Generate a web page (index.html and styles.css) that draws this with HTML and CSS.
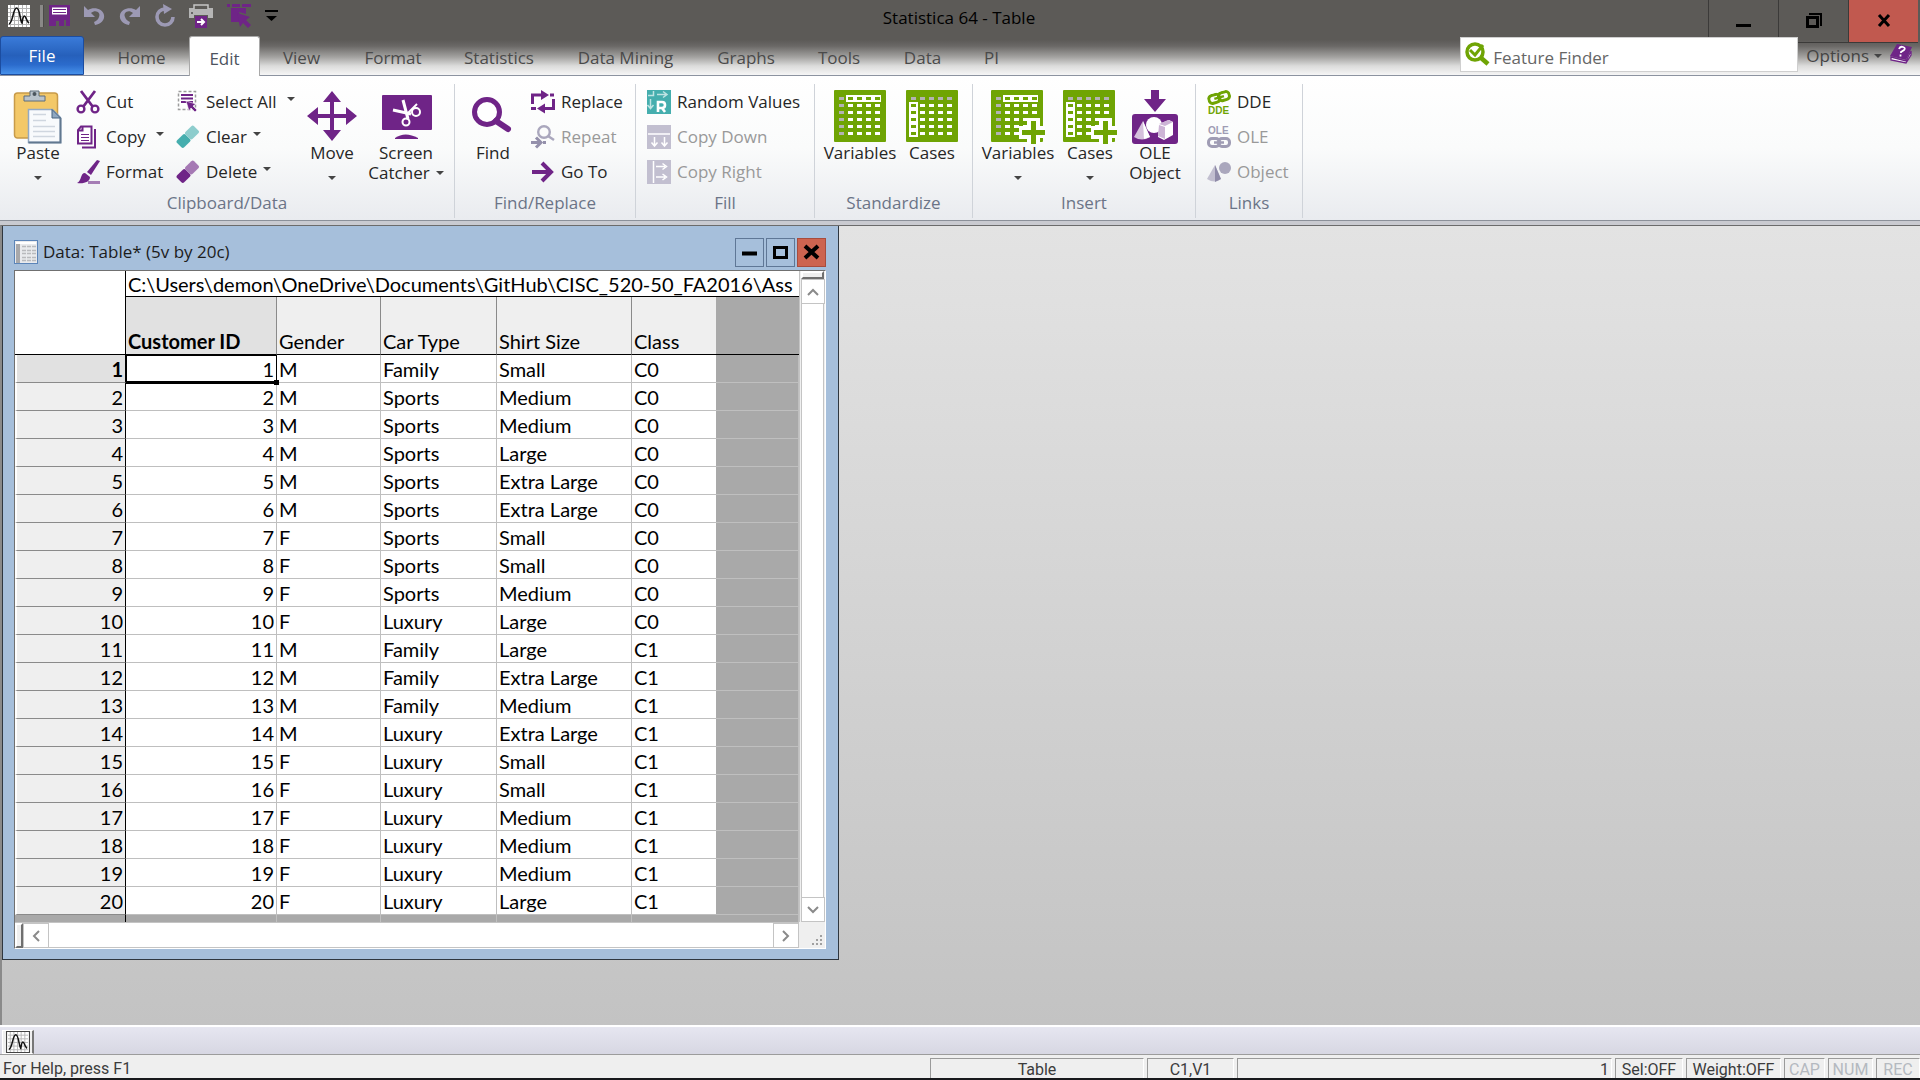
FILE: index.html
```html
<!DOCTYPE html>
<html lang="en">
<head>
<meta charset="utf-8">
<title>Statistica 64 - Table</title>
<link rel="stylesheet" href="styles.css">
</head>
<body>
<svg class="defs" aria-hidden="true">
  <symbol id="i-chart" viewBox="0 0 22 22">
    <rect width="22" height="22" fill="#fff"/>
    <path d="M2.500 0v22M6.500 0v22M10.500 0v22M14.500 0v22M18.500 0v22M0 3.500h22M0 7.500h22M0 11.500h22M0 15.500h22M0 19.500h22" stroke="#b4b4b4"/>
    <path d="M1 19C5 18 5 3 8.500 3S12 16 14 18C15 13 15 11 16.500 11S18 16 21 18" fill="none" stroke="#111" stroke-width="1.600"/>
  </symbol>
  <symbol id="i-grid" viewBox="0 0 54 54">
    <rect width="52" height="52" rx="1" fill="#6fa404"/>
    <path d="M14 15.500h33M14 22.500h33M14 29.500h33M14 36.500h33M14 43.500h33" stroke="#fff" stroke-width="3" stroke-dasharray="5 4"/>
  </symbol>
  <symbol id="i-vars" viewBox="0 0 54 54">
    <use href="#i-grid" width="54" height="54"/>
    <path d="M5 8.500h5M5 15.500h5M5 22.500h5M5 29.500h5M5 36.500h5M5 43.500h5" stroke="#b3b3b3" stroke-width="3"/>
    <rect x="12" y="5" width="35" height="7" fill="#fff"/>
    <path d="M14 8.500h32" stroke="#6fa404" stroke-width="3" stroke-dasharray="5 4"/>
  </symbol>
  <symbol id="i-cases" viewBox="0 0 54 54">
    <use href="#i-grid" width="54" height="54"/>
    <path d="M5 8.500h42" stroke="#b3b3b3" stroke-width="3" stroke-dasharray="5 4"/>
    <rect x="3" y="12" width="9" height="35" fill="#fff"/>
    <path d="M5 15.500h5M5 22.500h5M5 29.500h5M5 36.500h5M5 43.500h5" stroke="#6fa404" stroke-width="3"/>
  </symbol>
  <symbol id="i-plus" viewBox="0 0 54 54">
    <path d="M36 28h13v8h5v12h-5v6h-13v-5h-8v-13h8z" fill="#fff"/>
    <path d="M42.500 31v23M31 42.500h23" stroke="#6fa404" stroke-width="5"/>
  </symbol>
  <symbol id="i-shears" viewBox="0 0 24 24">
    <path d="M5 1L17 17M19 1L7 17" stroke="currentColor" stroke-width="2.800" fill="none"/>
    <circle cx="5" cy="19" r="3.400" fill="none" stroke="currentColor" stroke-width="2.400"/>
    <circle cx="19" cy="19" r="3.400" fill="none" stroke="currentColor" stroke-width="2.400"/>
  </symbol>
  <symbol id="i-eraser" viewBox="0 0 24 24">
    <rect x="-6" y="-5" width="12" height="10" rx="2" transform="translate(16 7.500) rotate(-45)" fill="currentColor" opacity=".6"/>
    <rect x="-6" y="-5" width="12" height="10" rx="2" transform="translate(7.500 16) rotate(-45)" fill="currentColor"/>
  </symbol>
  <symbol id="i-links" viewBox="0 0 24 12">
    <rect x="1.500" y="1.500" width="11" height="8" rx="3.500" fill="none" stroke="currentColor" stroke-width="3"/>
    <rect x="11.500" y="1.500" width="11" height="8" rx="3.500" fill="none" stroke="currentColor" stroke-width="3"/>
    <path d="M7 5.500h10" stroke="currentColor" stroke-width="2.500"/>
  </symbol>
</svg>

<header class="header">
  <div class="titlebar">
    <div class="quick">
      <svg class="app" width="22" height="22"><use href="#i-chart"/></svg>
      <i class="grip"></i>
      <button aria-label="Save"><svg width="21" height="21" viewBox="0 0 21 21"><path d="M0 0h21v21h-4v-6h-2v6h-5v-5H7v5H0z" fill="#6f2487"/><path d="M3 2.500h15v7H3z" fill="#fff"/><path d="M4 4.500h13M4 7.500h13" stroke="#6f2487"/></svg></button>
      <button aria-label="Undo"><svg width="21" height="21" viewBox="0 0 21 21"><path d="M0 1v11h11L7 8c5-4 10 0 8 4-1 3-3 4-5 5l1 3c6-1 10-5 9-10C19 4 10 1 4 5z" fill="#9c99b4"/></svg></button>
      <button aria-label="Redo"><svg width="21" height="21" viewBox="0 0 21 21"><path d="M21 1v11H10l4-4C9 4 4 8 6 12c1 3 3 4 5 5l-1 3C4 19 0 15 1 10 2 4 11 1 17 5z" fill="#9c99b4"/></svg></button>
      <button aria-label="Repeat"><svg width="21" height="23" viewBox="0 0 21 23"><path d="M11 5a8 8 0 1 0 8 8" fill="none" stroke="#9c99b4" stroke-width="3.600"/><path d="M9 0l9 5-8 5z" fill="#9c99b4"/></svg></button>
      <button aria-label="Print"><svg width="24" height="24" viewBox="0 0 24 24"><path d="M0 4h24v10h-5v-3H5v3H0z" fill="#b5b5b5"/><path d="M5 5V1h14v4" fill="#5c5a57" stroke="#c5c5c5" stroke-width="1.500"/><rect x="2" y="8" width="2" height="2" fill="#666"/><rect x="6" y="12" width="12" height="12" fill="#6f2487"/><path d="M8 18h7M12 15l3 3-3 3" fill="none" stroke="#fff" stroke-width="2"/></svg></button>
      <button aria-label="Select"><svg width="24" height="24" viewBox="0 0 24 24"><path d="M0 1.500h3M5 1.500h8M15 1.500h9" stroke="#6f2487" stroke-width="3"/><path d="M4 4h15v6l-7-2 3 10H4z" fill="#6f2487"/><path d="M10 9l13 4-4 3 5 5-3 3-5-5-3 4z" fill="#6f2487"/></svg></button>
      <button aria-label="Customize"><svg width="13" height="12" viewBox="0 0 13 12"><path d="M0 1h13" stroke="#000" stroke-width="2"/><path d="M1 6h11L6.500 11z"/></svg></button>
    </div>
    <h1 class="caption">Statistica 64 - Table</h1>
    <div class="controls">
      <button aria-label="Minimize"><svg width="16" height="16"><path d="M0 12.500h15" stroke="#000" stroke-width="3"/></svg></button>
      <button aria-label="Restore"><svg width="16" height="16"><path d="M3 1h12v12" fill="none" stroke="#000" stroke-width="2"/><rect x="1.500" y="4.500" width="10" height="9" fill="none" stroke="#000" stroke-width="3"/></svg></button>
      <button class="close" aria-label="Close"><svg width="16" height="16"><path d="M3 2l10 11M13 2L3 13" stroke="#000" stroke-width="3"/></svg></button>
    </div>
  </div>
  <div class="tabrow">
    <nav class="tabs">
      <button class="file">File</button>
      <button class="home">Home</button><button class="on">Edit</button><button>View</button><button>Format</button><button>Statistics</button><button>Data Mining</button><button>Graphs</button><button>Tools</button><button>Data</button><button>PI</button>
    </nav>
    <label class="finder">
      <svg width="24" height="24" viewBox="0 0 24 24"><path d="M15 15l8 7" stroke="#6fa404" stroke-width="4.500"/><circle cx="10" cy="10" r="8" fill="#fff" stroke="#6fa404" stroke-width="3.500"/><path d="M5 8l5 5 8-10" fill="none" stroke="#6fa404" stroke-width="3"/></svg>
      <input type="text" placeholder="Feature Finder" aria-label="Feature Finder">
    </label>
    <button class="options">Options <i class="arrow"></i></button>
    <button class="help" aria-label="Help"><svg width="22" height="20" viewBox="0 0 22 20"><path d="M7 0l15 3-6 13L0 12z" fill="#6f2487"/><path d="M1 13l15 4 5-10v4l-5 8L1 16z" fill="#fff" stroke="#6f2487" stroke-width="1.300"/><path d="M9 5q1-3 4-2t1 3l-3 2v1M10.500 10.500v2" fill="none" stroke="#fff" stroke-width="1.800"/></svg></button>
  </div>
</header>

<section class="ribbon">
  <div class="group tight">
    <div class="tools">
      <button class="big"><svg width="54" height="54" viewBox="0 0 54 54"><rect x="3.500" y="3" width="43" height="45" rx="3" fill="#f3c868" stroke="#c89b4a" stroke-width="1.500"/><path d="M13 11V6h6V1h9v5h6v5z" fill="#b9c3cc" stroke="#5d6c7b"/><circle cx="23.500" cy="4" r="2" fill="#4b555e"/><path d="M17.500 19.500h24l8 8v25h-32z" fill="#f8fafc" stroke="#93a9c2" stroke-width="1.500"/><path d="M41 19.500v8.500h8.500z" fill="#8fa7c0" stroke="#47637f"/><path d="M49.500 28v24.500h-32" fill="none" stroke="#61788f" stroke-width="2"/><path d="M22 24.500h13M22 30.500h13M22 36.500h22M22 41.500h22M22 46.500h22" stroke="#cfd6df" stroke-width="1.500"/></svg><span>Paste</span><i class="arrow"></i></button>
      <div class="stack s1">
        <button><svg class="violet" width="24" height="24"><use href="#i-shears"/></svg>Cut</button>
        <button class="split"><svg width="24" height="24" viewBox="0 0 24 24"><path d="M5 1.500h10.500v17H2V5z" fill="#fff" stroke="#6f2487" stroke-width="2"/><path d="M2 5.500h4.500V1" fill="none" stroke="#6f2487" stroke-width="2"/><path d="M5 9.500h8M5 12.500h8M5 15.500h8" stroke="#6f2487"/><path d="M19 4v18.500H6" fill="none" stroke="#6f2487" stroke-width="2"/></svg>Copy<i class="arrow"></i></button>
        <button><svg width="24" height="24" viewBox="0 0 24 24"><path d="M21 0l3 1-9 14-4-3z" fill="#6f2487"/><path d="M9 13l5 4c0 5-6 7-13 6 5-2 3-10 8-10z" fill="#6f2487"/><path d="M12 22.500h12" stroke="#a57db5" stroke-width="3"/></svg>Format</button>
      </div>
      <div class="stack s2">
        <button class="split"><svg width="24" height="24" viewBox="0 0 24 24"><path d="M2.500 1.500h17v18h-17z" fill="none" stroke="#9c9c9c" stroke-width="1.500" stroke-dasharray="3 2"/><path d="M5 5h12M5 8.500h12M5 12h12" stroke="#6f2487" stroke-width="2.200"/><path d="M10 11l10 3-3 2 4 4-2 2-4-4-2 3z" fill="#6f2487" stroke="#fff" stroke-width=".6"/></svg>Select All<i class="arrow"></i></button>
        <button><svg class="teal" width="24" height="24"><use href="#i-eraser"/></svg>Clear<i class="arrow"></i></button>
        <button><svg class="violet" width="24" height="24"><use href="#i-eraser"/></svg>Delete<i class="arrow"></i></button>
      </div>
      <button class="big"><svg width="54" height="54" viewBox="0 0 54 54"><path d="M27 8v36M9 26h36" stroke="#6f2487" stroke-width="4"/><path d="M27 1l9 11H18zM27 51l9-11H18zM2 26l11-9v18zM52 26l-11-9v18z" fill="#6f2487"/></svg><span>Move</span><i class="arrow"></i></button>
      <button class="big catcher"><svg width="54" height="54" viewBox="0 0 54 54"><rect x="3" y="5" width="50" height="35" rx="1" fill="#6f2487"/><path d="M16 48q10-7 23 0v1H16z" fill="#6f2487"/><g fill="none" stroke="#fff"><path d="M24 10l5 19M14 20l18 4" stroke-width="3"/><path d="M27 25l11-11" stroke-width="2"/><circle cx="37" cy="22" r="4" stroke-width="2"/><circle cx="27" cy="32" r="3.500" stroke-width="2"/></g></svg><span>Screen</span><span class="line">Catcher <i class="arrow"></i></span></button>
    </div>
    <h2>Clipboard/Data</h2>
  </div>
  <div class="group tight find">
    <div class="tools">
      <button class="big"><svg width="54" height="54" viewBox="0 0 54 54"><circle cx="21" cy="22" r="12.500" fill="#fff" stroke="#6f2487" stroke-width="5"/><path d="M30 31l12 8" stroke="#6f2487" stroke-width="6" stroke-linecap="round"/></svg><span>Find</span></button>
      <div class="stack">
        <button><svg width="24" height="24" viewBox="0 0 24 24"><path d="M1.500 14V5H12M22.500 9v9.500H12" fill="none" stroke="#6f2487" stroke-width="3"/><path d="M10 0l8 5-8 5zM14 13.500l-8 5 8 5z" fill="#6f2487"/><path d="M19 5h4M0 18.500h5" stroke="#6f2487" stroke-width="3"/></svg>Replace</button>
        <button disabled><svg width="24" height="24" viewBox="0 0 24 24"><circle cx="13" cy="7" r="5.800" fill="none" stroke="#aaa7bd" stroke-width="2.400"/><path d="M17 11l6 4" stroke="#aaa7bd" stroke-width="2.500"/><path d="M0 17.500h9M5 12.500l5 5-5 5M12 17.500h3" fill="none" stroke="#9490ab" stroke-width="3"/></svg>Repeat</button>
        <button><svg width="24" height="24" viewBox="0 0 24 24"><path d="M1 12h18M11 3l9 9-9 9" fill="none" stroke="#6f2487" stroke-width="4"/></svg>Go To</button>
      </div>
    </div>
    <h2>Find/Replace</h2>
  </div>
  <div class="group fill">
    <div class="tools">
      <div class="stack">
        <button><svg width="24" height="24" viewBox="0 0 24 24"><rect width="24" height="24" fill="#45aeae"/><path d="M6.500 1v4.500H1M10 4.500h9M16 1.500l4 3-4 3M3.500 9v9M.5 15l3 3.500 3-3.500" fill="none" stroke="#bfe4e3" stroke-width="1.500"/><path d="M11 22V12h4q3 0 3 3t-3 3h-4M15 18l3 4" fill="none" stroke="#fff" stroke-width="2.600"/></svg>Random Values</button>
        <button disabled><svg width="24" height="24" viewBox="0 0 24 24"><rect width="24" height="24" fill="#c2bfd0"/><path d="M1 9h22M7.500 12v9M17.500 12v9M4.500 17.500l3 3.500 3-3.500M14.500 17.500l3 3.500 3-3.500" fill="none" stroke="#fff" stroke-width="1.500"/></svg>Copy Down</button>
        <button disabled><svg width="24" height="24" viewBox="0 0 24 24"><rect width="24" height="24" fill="#c2bfd0"/><path d="M6.500 1v22M9 6.500h9M9 17h9M15.500 3.500l4 3-4 3M15.500 14l4 3-4 3" fill="none" stroke="#fff" stroke-width="1.500"/></svg>Copy Right</button>
      </div>
    </div>
    <h2>Fill</h2>
  </div>
  <div class="group std">
    <div class="tools">
      <button class="big"><svg width="52" height="54" viewBox="0 0 52 54"><use href="#i-vars" width="54" height="54"/></svg><span>Variables</span></button>
      <button class="big"><svg width="52" height="54" viewBox="0 0 52 54"><use href="#i-cases" width="54" height="54"/></svg><span>Cases</span></button>
    </div>
    <h2>Standardize</h2>
  </div>
  <div class="group insert">
    <div class="tools">
      <button class="big"><svg width="54" height="54"><use href="#i-vars"/><use href="#i-plus"/></svg><span>Variables</span><i class="arrow"></i></button>
      <button class="big"><svg width="54" height="54"><use href="#i-cases"/><use href="#i-plus"/></svg><span>Cases</span><i class="arrow"></i></button>
      <button class="big ole"><svg width="54" height="54" viewBox="0 0 54 54"><path d="M23 0h8v9h7L27 22 16 9h7z" fill="#6f2487"/><rect x="4" y="24" width="46" height="30" rx="3" fill="#6f2487"/><path d="M15 31l7 16q-8 5-16 0z" fill="#d5bfdc"/><path d="M15 31l7 16-6 2z" fill="#fff"/><circle cx="26" cy="35" r="8" fill="#fff"/><path d="M31 34l10-4 4 2v13l-9 5-6-3z" fill="#fff"/><path d="M31 35l6 2v12l-7-3zM31 34l9-4 5 2-8 4z" fill="#cdb4d6"/></svg><span>OLE</span><span>Object</span></button>
    </div>
    <h2>Insert</h2>
  </div>
  <div class="group links">
    <div class="tools">
      <div class="stack">
        <button><svg class="green" width="24" height="24" viewBox="0 0 24 24"><g transform="rotate(-16 12 7)"><use href="#i-links" x="0" y="2" width="24" height="12"/></g><text class="glyph" x="1" y="24">DDE</text></svg>DDE</button>
        <button disabled><svg class="mute" width="24" height="24" viewBox="0 0 24 24"><text class="glyph" x="1" y="9">OLE</text><use href="#i-links" y="12" width="24" height="12"/></svg>OLE</button>
        <button disabled><svg width="24" height="24" viewBox="0 0 24 24"><path d="M8 5l6 14q-6 5-14 0z" fill="#c2bfd0"/><path d="M8 5l6 14-6 3z" fill="#8f8ba8"/><circle cx="18" cy="8" r="6" fill="#aaa7bd"/></svg>Object</button>
      </div>
    </div>
    <h2>Links</h2>
  </div>
</section>

<main class="desk">
  <section class="window">
    <div class="wintitle">
      <svg width="24" height="24" viewBox="0 0 24 24"><rect x=".5" y=".5" width="23" height="23" fill="#e9eaed" stroke="#5b84b8"/><path d="M2 4h4v19H2z" fill="#a8a8aa"/><path d="M2 3h20" stroke="#fff" stroke-width="2"/><path d="M8 6.500h14M8 10.500h14M8 13.500h14M8 17.500h14M8 20.500h14" stroke="#b9babd" stroke-width="1.500" stroke-dasharray="4 1"/></svg>
      <h2>Data: Table* (5v by 20c)</h2>
      <button aria-label="Minimize table"><svg width="17" height="17"><path d="M1 9.500h15" stroke="#000" stroke-width="4"/></svg></button>
      <button aria-label="Maximize table"><svg width="17" height="17"><rect x="2.500" y="3.500" width="12" height="10" fill="none" stroke="#000" stroke-width="3"/></svg></button>
      <button class="close" aria-label="Close table"><svg width="17" height="17"><path d="M2 2l13 12M15 2L2 14" stroke="#000" stroke-width="4"/></svg></button>
    </div>
    <div class="sheet">
      <div class="cells">
        <table>
          <colgroup><col class="c0"><col class="c1"><col class="c2"><col class="c3"><col class="c4"><col class="c5"><col></colgroup>
          <thead>
            <tr class="path"><td rowspan="2" class="corner"></td><td colspan="6">C:\Users\demon\OneDrive\Documents\GitHub\CISC_520-50_FA2016\Ass</td></tr>
            <tr class="names"><th class="cur">Customer ID</th><th>Gender</th><th>Car Type</th><th>Shirt Size</th><th>Class</th><td class="void"></td></tr>
          </thead>
          <tbody>
            <tr class="active"><th>1</th><td class="picked">1</td><td>M</td><td>Family</td><td>Small</td><td>C0</td><td></td></tr>
            <tr><th>2</th><td>2</td><td>M</td><td>Sports</td><td>Medium</td><td>C0</td><td></td></tr>
            <tr><th>3</th><td>3</td><td>M</td><td>Sports</td><td>Medium</td><td>C0</td><td></td></tr>
            <tr><th>4</th><td>4</td><td>M</td><td>Sports</td><td>Large</td><td>C0</td><td></td></tr>
            <tr><th>5</th><td>5</td><td>M</td><td>Sports</td><td>Extra Large</td><td>C0</td><td></td></tr>
            <tr><th>6</th><td>6</td><td>M</td><td>Sports</td><td>Extra Large</td><td>C0</td><td></td></tr>
            <tr><th>7</th><td>7</td><td>F</td><td>Sports</td><td>Small</td><td>C0</td><td></td></tr>
            <tr><th>8</th><td>8</td><td>F</td><td>Sports</td><td>Small</td><td>C0</td><td></td></tr>
            <tr><th>9</th><td>9</td><td>F</td><td>Sports</td><td>Medium</td><td>C0</td><td></td></tr>
            <tr><th>10</th><td>10</td><td>F</td><td>Luxury</td><td>Large</td><td>C0</td><td></td></tr>
            <tr><th>11</th><td>11</td><td>M</td><td>Family</td><td>Large</td><td>C1</td><td></td></tr>
            <tr><th>12</th><td>12</td><td>M</td><td>Family</td><td>Extra Large</td><td>C1</td><td></td></tr>
            <tr><th>13</th><td>13</td><td>M</td><td>Family</td><td>Medium</td><td>C1</td><td></td></tr>
            <tr><th>14</th><td>14</td><td>M</td><td>Luxury</td><td>Extra Large</td><td>C1</td><td></td></tr>
            <tr><th>15</th><td>15</td><td>F</td><td>Luxury</td><td>Small</td><td>C1</td><td></td></tr>
            <tr><th>16</th><td>16</td><td>F</td><td>Luxury</td><td>Small</td><td>C1</td><td></td></tr>
            <tr><th>17</th><td>17</td><td>F</td><td>Luxury</td><td>Medium</td><td>C1</td><td></td></tr>
            <tr><th>18</th><td>18</td><td>F</td><td>Luxury</td><td>Medium</td><td>C1</td><td></td></tr>
            <tr><th>19</th><td>19</td><td>F</td><td>Luxury</td><td>Medium</td><td>C1</td><td></td></tr>
            <tr><th>20</th><td>20</td><td>F</td><td>Luxury</td><td>Large</td><td>C1</td><td></td></tr>
          </tbody>
          <tfoot><tr><td></td><td></td><td></td><td></td><td></td><td></td><td></td></tr></tfoot>
        </table>
      </div>
      <div class="vscroll">
        <i class="splitter"></i>
        <button aria-label="Scroll up"><svg width="12" height="8"><path d="M1 7l5-5 5 5"/></svg></button>
        <i class="track"></i>
        <button aria-label="Scroll down"><svg width="12" height="8"><path d="M1 1l5 5 5-5"/></svg></button>
      </div>
      <div class="hscroll">
        <i class="splitter"></i>
        <button aria-label="Scroll left"><svg width="8" height="12"><path d="M7 1L2 6l5 5"/></svg></button>
        <i class="track"></i>
        <button aria-label="Scroll right"><svg width="8" height="12"><path d="M1 1l5 5-5 5"/></svg></button>
      </div>
      <svg class="size" width="24" height="26"><path d="M21 14h2M17 18h6M13 22h10" stroke="#a0a0a0" stroke-width="2" stroke-dasharray="2 2"/></svg>
    </div>
  </section>
</main>

<div class="docbar"><button aria-label="Table"><svg width="24" height="22" viewBox="0 0 22 22"><use href="#i-chart"/></svg></button></div>
<footer class="status">
  <span class="hint">For Help, press F1</span>
  <span class="pane">Table</span>
  <span class="pane">C1,V1</span>
  <span class="pane end">1</span>
  <span class="pane">Sel:OFF</span>
  <span class="pane">Weight:OFF</span>
  <span class="pane dim">CAP</span>
  <span class="pane dim">NUM</span>
  <span class="pane dim">REC</span>
</footer>
</body>
</html>
```

FILE: styles.css
```css
* { box-sizing: border-box; }
body {
  margin: 0;
  min-height: 100vh;
  display: flex;
  flex-direction: column;
  background: #efefef;
  font-family: "Open Sans", "Noto Sans", sans-serif;
  font-size: 17px;
  line-height: 20px;
  color: #262626;
}
button {
  margin: 0;
  padding: 0;
  border: 0;
  background: none;
  font: inherit;
  color: inherit;
  white-space: nowrap;
}
svg { display: block; flex: none; overflow: visible; }
h1, h2 { margin: 0; font: inherit; }
.defs { position: absolute; width: 0; height: 0; }
.glyph { font: 700 10px "Liberation Sans", sans-serif; fill: currentColor; }
.arrow {
  display: inline-block;
  flex: none;
  border: 4px solid transparent;
  border-top-color: #444;
  border-bottom: 0;
}

/* title bar and tabs */
.header {
  border-bottom: 1px solid #8c93a0;
  background: linear-gradient(#5c5a57 40px, #6a6866 46px, #a3a2a0 57px, #dcdcdb 66px, #f6f6f6 75px);
}
.titlebar {
  display: grid;
  grid-template-columns: 1fr auto 1fr;
  height: 36px;
  padding-right: 2px;
}
.quick { display: flex; align-items: center; gap: 14px; height: 31px; padding-left: 8px; }
.quick .app { margin-right: -4px; }
.grip { width: 4px; height: 22px; margin-right: -9px; background: #8a8987; border-right: 1px solid #4c4b49; }
.caption { color: #000; padding-top: 8px; }
.controls { display: flex; justify-content: flex-end; }
.controls button {
  width: 70px;
  height: 43px;
  display: flex;
  align-items: center;
  justify-content: center;
  border: 1px solid #3b3a39;
  border-width: 0 0 1px 1px;
}
.controls .close { background: #c1594f; }
.tabrow { display: flex; height: 39px; padding-right: 8px; }
.tabs {
  display: grid;
  grid-template-columns: 84px 105px 71px 83px 100px 112px 141px 100px 86px 81px 57px;
  margin-right: auto;
  color: #4a4a4a;
}
.tabs button { padding-top: 4px; }
.tabs .file {
  padding-top: 0;
  color: #fff;
  border: 1px solid #1c4da0;
  border-radius: 3px 3px 0 0;
  background: linear-gradient(#3a7bd9, #2660bb 50%, #2b6bcc 75%, #4791ea);
}
.tabs .home { padding-left: 10px; }
.tabs .on {
  margin-bottom: -1px;
  background: #fff;
  border: 1px solid #a9a9a9;
  border-bottom: 0;
  border-radius: 3px 3px 0 0;
  color: #4d5360;
}
.finder {
  display: flex;
  align-items: flex-start;
  gap: 4px;
  width: 338px;
  height: 35px;
  margin-top: 1px;
  padding: 4px;
  border: 1px solid #cfcfcf;
  background: #fff;
}
.finder input {
  flex: 1;
  min-width: 0;
  height: 27px;
  padding: 4px 0 0;
  border: 0;
  font: inherit;
  background: none;
}
.finder input::placeholder { color: #666; opacity: 1; }
.options { margin: 0 8px; color: #444; display: flex; align-items: center; gap: 5px; }
.help { align-self: center; margin-top: -4px; }

/* ribbon */
.ribbon {
  display: flex;
  height: 145px;
  padding: 8px 0 2px;
  border-bottom: 1px solid #8b9099;
  background: linear-gradient(#fff, #fafbfb 50%, #e9ebef);
}
.group {
  display: flex;
  flex-direction: column;
  padding-left: 10px;
  border-right: 1px solid #cfd3d9;
  width: 107px;
}
.group.tight { padding-left: 3px; width: 455px; }
.group.find { width: 181px; }
.group.fill { width: 179px; }
.group.std { width: 158px; }
.group.insert { width: 223px; }
.group h2 { margin-left: -10px; text-align: center; color: #6b7487; line-height: 28px; }
.group.tight h2 { margin-left: -3px; }
.tools { display: flex; gap: 2px; height: 105px; }
.big {
  width: 70px;
  padding-top: 6px;
  display: flex;
  flex-direction: column;
  align-items: center;
}
.big > svg { margin-bottom: -1px; }
.big > .arrow { margin-top: 13px; }
.big.catcher { width: 74px; }
.big.ole { width: 56px; }
.line { display: flex; align-items: center; gap: 6px; }
.stack { padding: 0 1px; }
.stack.s1 { width: 98px; }
.stack.s2 { width: 120px; }
.stack button { display: flex; align-items: center; gap: 6px; height: 35px; }
.stack .arrow { margin-top: -6px; }
.stack .split .arrow { margin-left: 4px; }
.stack button:disabled { color: #999; }
.stack .violet { color: #6f2487; }
.stack .teal { color: #45aeae; }
.stack .green { color: #6fa404; }
.stack .mute { color: #9f9cb4; }

/* document area */
.desk {
  position: relative;
  flex: 1;
  min-height: 740px;
  border: 1px solid #6b6b6b;
  border-width: 1px 0 0 2px;
  border-left-color: #8a8a8a;
  margin-top: 4px;
  outline: 4px solid #c9cad0;
  background: linear-gradient(#e3e3e3, #c3c3c3);
}
.window {
  position: absolute;
  left: 0;
  top: 0;
  width: 837px;
  padding: 10px 12px 10px 11px;
  background: #a6bfdb;
  border: 1px solid #2f3740;
  border-top: 0;
}
.wintitle { display: flex; align-items: center; gap: 2px; height: 32px; margin-bottom: 2px; }
.wintitle h2 { flex: 1; margin-left: 3px; color: #1c1c1c; }
.wintitle button {
  width: 29px;
  height: 29px;
  display: flex;
  align-items: center;
  justify-content: center;
  border: 1px solid #5f7796;
}
.wintitle .close { background: #cd6450; border-color: #a84c3d; }
.sheet {
  display: grid;
  grid-template-columns: 1fr 26px;
  border: 1px solid #707070;
  border-right-color: #fff;
  border-bottom-color: #fff;
  background: #efefef;
}
.cells { overflow: hidden; }
.cells table {
  width: 100%;
  table-layout: fixed;
  border-collapse: separate;
  border-spacing: 0;
  font: 20px/26px Lato, Carlito, sans-serif;
  color: #000;
}
.c0 { width: 111px; }
.c1 { width: 151px; }
.c2 { width: 104px; }
.c3 { width: 116px; }
.c4 { width: 135px; }
.c5 { width: 84px; }
.cells td, .cells th {
  height: 28px;
  padding: 0 2px;
  text-align: left;
  font-weight: 400;
  white-space: nowrap;
  overflow: hidden;
  border-right: 1px solid #bfbfbf;
  border-bottom: 1px solid #bfbfbf;
  background: #fff;
}
.cells .path td { height: 26px; line-height: 24px; border-bottom-color: #000; border-right-color: #000; }
.cells .path td + td { border-right: 0; }
.cells .names th, .cells .void {
  height: 58px;
  vertical-align: bottom;
  background: #efefef;
  border-right-color: #8a8a8a;
  border-bottom-color: #000;
}
.cells .names .cur { font-weight: 700; background: #e1e1e1; }
.cells tbody th {
  text-align: right;
  background: #efefef;
  border-right-color: #000;
  border-bottom-color: #8a8a8a;
  border-left: 2px solid #fff;
}
.cells tbody td:nth-child(2) { text-align: right; }
.cells .active th { font-weight: 700; background: #e1e1e1; }
.cells td:nth-child(6), .cells .names th:nth-child(5) { border-right: 0; }
.cells tbody td:last-child, .cells .void, .cells tfoot td { background: #a9a9a9; }
.cells .picked {
  position: relative;
  overflow: visible;
  border-right-color: #000;
  border-bottom-color: #000;
  box-shadow: inset 1px 1px #000, inset 0 -1px #000, 0 1px #000;
}
.cells .picked::after {
  content: "";
  position: absolute;
  right: -3px;
  bottom: -3px;
  width: 5px;
  height: 5px;
  background: #000;
}
.cells tfoot td { height: 7px; padding: 0; border-bottom: 0; }
.cells tfoot td:first-child { border-right-color: #000; }
.vscroll { display: flex; flex-direction: column; padding: 0 1px; border-left: 1px solid #c4c4c4; }
.hscroll { display: flex; height: 26px; border-top: 1px solid #c4c4c4; }
.track { flex: 1; background: #fff; }
.vscroll button, .hscroll button {
  display: flex;
  align-items: center;
  justify-content: center;
  width: 24px;
  height: 25px;
  background: #fff;
  border: 1px solid #c4c4c4;
}
.hscroll button { width: 26px; }
.vscroll path, .hscroll path { fill: none; stroke: #8a8a8a; stroke-width: 2; }
.vscroll .track { border: 1px solid #c4c4c4; border-width: 0 1px; }
.hscroll .track { border-bottom: 1px solid #c4c4c4; }
.splitter { background: #efefef; border: 2px solid #6f6f6f; border-top-color: #fff; border-left-color: #fff; }
.vscroll .splitter { height: 8px; }
.hscroll .splitter { width: 8px; }

/* bottom bars */
.docbar {
  position: relative;
  height: 30px;
  padding: 3px 2px 0;
  border-top: 2px solid #fff;
  border-bottom: 1px solid #9c9c9c;
  background: linear-gradient(#e6e6f0, #d7d7e3);
}
.docbar button {
  width: 32px;
  height: 24px;
  padding-left: 3px;
  background: #efefef;
  border: 1px solid #fff;
  border-right: 2px solid #777;
}
.docbar button svg { border: 1px solid #444; }
.status {
  display: grid;
  grid-template-columns: 1fr 214px 87px 375px 68px 95px 41px 45px 44px;
  gap: 3px;
  height: 25px;
  padding-top: 3px;
  border-bottom: 2px solid #18191c;
  overflow: hidden;
  font: 16px/21px Roboto, "Liberation Sans", sans-serif;
  color: #3c3c3c;
}
.hint { padding-left: 3px; }
.pane {
  height: 21px;
  text-align: center;
  border: 1px solid #9a9a9a;
  border-right-color: #fff;
  border-bottom: 0;
}
.pane.end { text-align: right; padding-right: 2px; }
.pane.dim { color: #b4b9c0; }
```
